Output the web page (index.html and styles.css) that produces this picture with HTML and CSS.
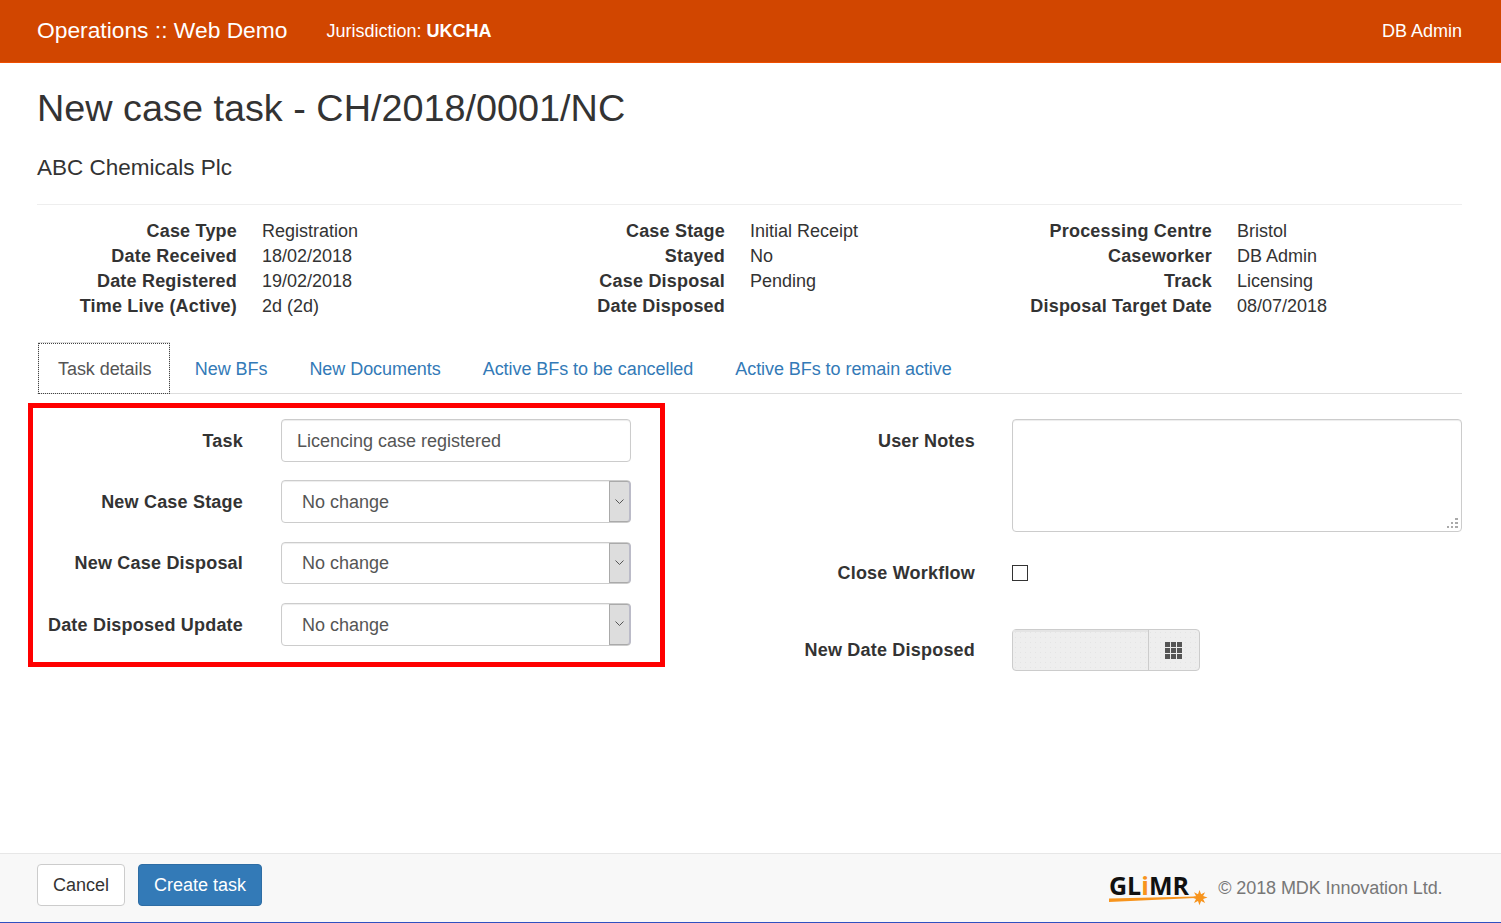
FILE: index.html
```html
<!DOCTYPE html>
<html lang="en">
<head>
<meta charset="utf-8">
<title>New case task</title>
<link rel="stylesheet" href="styles.css">
</head>
<body>
<header class="topbar">
  <span class="brand">Operations :: Web Demo</span>
  <span class="jurisdiction">Jurisdiction: <b>UKCHA</b></span>
  <span class="user">DB Admin</span>
</header>
<main class="main">
  <h1 class="title">New case task - CH/2018/0001/NC</h1>
  <p class="subtitle">ABC Chemicals Plc</p>
  <section class="info">
    <dl class="info-col">
      <dt>Case Type</dt><dd>Registration</dd>
      <dt>Date Received</dt><dd>18/02/2018</dd>
      <dt>Date Registered</dt><dd>19/02/2018</dd>
      <dt>Time Live (Active)</dt><dd>2d (2d)</dd>
    </dl>
    <dl class="info-col">
      <dt>Case Stage</dt><dd>Initial Receipt</dd>
      <dt>Stayed</dt><dd>No</dd>
      <dt>Case Disposal</dt><dd>Pending</dd>
      <dt>Date Disposed</dt><dd></dd>
    </dl>
    <dl class="info-col">
      <dt>Processing Centre</dt><dd>Bristol</dd>
      <dt>Caseworker</dt><dd>DB Admin</dd>
      <dt>Track</dt><dd>Licensing</dd>
      <dt>Disposal Target Date</dt><dd>08/07/2018</dd>
    </dl>
  </section>
  <nav class="tabs">
    <a class="tab tab-active" href="#"><span class="tab-focus">Task details</span></a>
    <a class="tab" href="#">New BFs</a>
    <a class="tab" href="#">New Documents</a>
    <a class="tab" href="#">Active BFs to be cancelled</a>
    <a class="tab" href="#">Active BFs to remain active</a>
  </nav>
  <section class="form">
    <div class="annotation"></div>
    <div class="form-left">
      <label class="field-label">Task</label>
      <input class="control" type="text" value="Licencing case registered">
      <label class="field-label">New Case Stage</label>
      <div class="select-wrap">
        <select class="control select"><option>No change</option></select>
        <span class="select-arrow"><svg width="9" height="6" viewBox="0 0 9 6"><path d="M.5 .5l4 4 4-4" fill="none" stroke="#555" stroke-width="1"/></svg></span>
      </div>
      <label class="field-label">New Case Disposal</label>
      <div class="select-wrap">
        <select class="control select"><option>No change</option></select>
        <span class="select-arrow"><svg width="9" height="6" viewBox="0 0 9 6"><path d="M.5 .5l4 4 4-4" fill="none" stroke="#555" stroke-width="1"/></svg></span>
      </div>
      <label class="field-label">Date Disposed Update</label>
      <div class="select-wrap">
        <select class="control select"><option>No change</option></select>
        <span class="select-arrow"><svg width="9" height="6" viewBox="0 0 9 6"><path d="M.5 .5l4 4 4-4" fill="none" stroke="#555" stroke-width="1"/></svg></span>
      </div>
    </div>
    <div class="form-right">
      <label class="field-label notes-label">User Notes</label>
      <div class="notes-wrap">
        <textarea class="notes"></textarea>
        <svg class="grip" width="12" height="11" viewBox="0 0 12 11"><g fill="#aaa"><rect x="8" y="0" width="3" height="2"/><rect x="4" y="4" width="2" height="2"/><rect x="8" y="4" width="3" height="2"/><rect x="0" y="8" width="2" height="2"/><rect x="4" y="8" width="2" height="2"/><rect x="8" y="8" width="3" height="2"/></g></svg>
      </div>
      <label class="field-label">Close Workflow</label>
      <div class="check-cell"><span class="checkbox"></span></div>
      <label class="field-label last-row">New Date Disposed</label>
      <div class="date-group last-row">
        <span class="date-input"></span>
        <span class="date-addon"><svg width="17" height="17" viewBox="0 0 17 17"><g fill="#555"><rect x="0" y="0" width="5" height="5"/><rect x="6" y="0" width="5" height="5"/><rect x="12" y="0" width="5" height="5"/><rect x="0" y="6" width="5" height="5"/><rect x="6" y="6" width="5" height="5"/><rect x="12" y="6" width="5" height="5"/><rect x="0" y="12" width="5" height="5"/><rect x="6" y="12" width="5" height="5"/><rect x="12" y="12" width="5" height="5"/></g></svg></span>
      </div>
    </div>
  </section>
</main>
<footer class="footer">
  <button class="btn btn-default" type="button">Cancel</button>
  <button class="btn btn-primary" type="button">Create task</button>
  <div class="footer-right">
    <svg class="logo" width="100" height="40" viewBox="0 0 100 40">
      <text class="logo-text" x="0" y="28">GL<tspan class="logo-i">i</tspan>MR</text>
      <path d="M0 31.5L86 29.5L86 31L0 35Z" fill="#f7941d"/>
      <path d="M90.5 23l1.6 4.2 4-2-2 3.7 4.4 1.6-4.4 1.4 2 4-4-2-1.6 4.4-1.5-4.4-4 2 2-4-4.2-1.4 4.2-1.6-2-3.7 4 2z" fill="#f7941d"/>
    </svg>
    <span class="copyright">© 2018 MDK Innovation Ltd.</span>
  </div>
</footer>
</body>
</html>
```
FILE: styles.css
```css
* { box-sizing: border-box; }
html, body { margin: 0; height: 923px; overflow: hidden; }
body {
  display: flex;
  flex-direction: column;
  font-family: "Liberation Sans", Arial, sans-serif;
  font-size: 18px;
  line-height: 25px;
  color: #333;
  background: #fff;
}
.topbar {
  display: flex;
  align-items: center;
  height: 63px;
  padding: 0 39px 0 37px;
  background: #d14600;
  border-bottom: 1px solid #f04e00;
  color: #fff;
}
.brand { font-size: 22.8px; margin-right: 39px; position: relative; top: -1px; }
.user { margin-left: auto; }
.main { flex: 1; padding: 0 39px 0 37px; }
.title { margin: 22px 0 0; font-size: 37.8px; line-height: 46px; font-weight: 400; }
.subtitle { margin: 21.5px 0 0; font-size: 22.5px; line-height: 30px; }
.info {
  display: grid;
  grid-template-columns: 488px 487px 1fr;
  margin-top: 21.5px;
  padding-top: 14px;
  border-top: 1px solid #eee;
}
.info-col {
  display: grid;
  grid-template-columns: 200px 1fr;
  column-gap: 25px;
  grid-auto-rows: 25px;
  margin: 0;
}
.info-col dt { font-weight: 700; letter-spacing: .2px; text-align: right; white-space: nowrap; }
.info-col dd { margin: 0; }
.tabs {
  display: flex;
  align-items: flex-end;
  height: 52px;
  margin-top: 23px;
  padding-left: 1px;
  border-bottom: 1px solid #ddd;
  letter-spacing: -.06px;
}
.tab {
  display: flex;
  align-items: center;
  height: 50px;
  padding: 2px 21px 0;
  color: #337ab7;
  text-decoration: none;
}
.tab-active {
  align-self: flex-start;
  padding: 0;
  margin-right: 3.5px;
  height: 51px;
  background: #fff;
  border: 1px solid #ddd;
  border-bottom: 0;
  color: #555;
}
.tab-focus {
  display: flex;
  align-items: center;
  height: 49px;
  padding: 3px 18px 0 19px;
  outline: 1px dotted #444;
  outline-offset: 0;
}
.form {
  position: relative;
  display: grid;
  grid-template-columns: 594px 1fr;
  padding-top: 25px;
}
.annotation {
  position: absolute;
  left: -9px;
  top: 9px;
  width: 637px;
  height: 264px;
  border: 5px solid #f00;
  pointer-events: none;
}
.form-left {
  display: grid;
  grid-template-columns: 206px 350px;
  column-gap: 38px;
  grid-auto-rows: 42.67px;
  row-gap: 18.67px;
  align-items: center;
}
.field-label { font-weight: 700; letter-spacing: .2px; text-align: right; white-space: nowrap; }
.form-left .field-label { padding-top: 2px; }
.control {
  display: block;
  width: 100%;
  height: 42.67px;
  padding: 2px 15px 0;
  font: inherit;
  color: #555;
  background: #fff;
  border: 1px solid #ccc;
  border-radius: 4px;
  box-shadow: inset 0 1px 1px rgba(0, 0, 0, .075);
}
.select-wrap { position: relative; height: 42.67px; }
.select { appearance: none; -webkit-appearance: none; padding-left: 20px; }
.select-arrow {
  position: absolute;
  top: 1px;
  right: 0;
  bottom: 1px;
  width: 22px;
  display: flex;
  align-items: center;
  justify-content: center;
  background: #ddd;
  border-left: 1px solid #aaa;
  border-top: 1px solid #aaa;
  border-right: 2px solid #bbbbc8;
  border-bottom: 1px solid #aaa;
  border-radius: 0 4px 4px 0;
}
.form-right {
  display: grid;
  grid-template-columns: 344px 450px;
  column-gap: 37px;
  grid-template-rows: 113px 82px 57px;
  align-items: center;
}
.notes-label { align-self: start; padding-top: 10px; }
.notes-wrap { position: relative; height: 113px; }
.notes {
  display: block;
  width: 100%;
  height: 113px;
  resize: none;
  border: 1px solid #ccc;
  border-radius: 4px;
  box-shadow: inset 0 1px 1px rgba(0, 0, 0, .075);
}
.grip { position: absolute; right: 3px; bottom: 3px; }
.check-cell { display: flex; }
.checkbox { width: 16px; height: 16px; border: 1px solid #333; background: #fff; }
.last-row { margin-top: 15px; }
.date-group {
  display: flex;
  width: 188px;
  height: 42px;
  border: 1px solid #ccc;
  border-radius: 4px;
  background-color: #eee;
  background-image: radial-gradient(circle, #e4e4e4 .6px, transparent .8px);
  background-size: 5px 5px;
}
.date-input { flex: 1; border-right: 1px solid #ccc; box-shadow: inset 0 2px 0 #e4e4e4; }
.date-addon { width: 50px; padding-right: 2px; display: flex; align-items: center; justify-content: center; }
.footer {
  display: flex;
  align-items: center;
  height: 70px;
  padding: 0 58.5px 6px 37px;
  background: #f8f8f8;
  border-top: 1px solid #e7e7e7;
  border-bottom: 1px solid #3050c0;
}
.btn {
  height: 42.67px;
  padding: 0 15px;
  font: inherit;
  white-space: nowrap;
  border: 1px solid #ccc;
  border-radius: 4px;
}
.btn-default { width: 88px; margin-right: 13px; background: #fff; color: #333; }
.btn-primary { width: 124px; background: #337ab7; border-color: #2e6da4; color: #fff; }
.footer-right { display: flex; align-items: center; margin-left: auto; margin-top: 6px; }
.logo { display: block; margin-right: 9px; margin-bottom: 2px; width: 100px; }
.logo-text { font-family: "Open Sans", sans-serif; font-weight: 700; font-size: 25px; fill: #111; }
.logo-i { fill: #f7941d; }
.copyright { color: #777; letter-spacing: -.08px; }
```
